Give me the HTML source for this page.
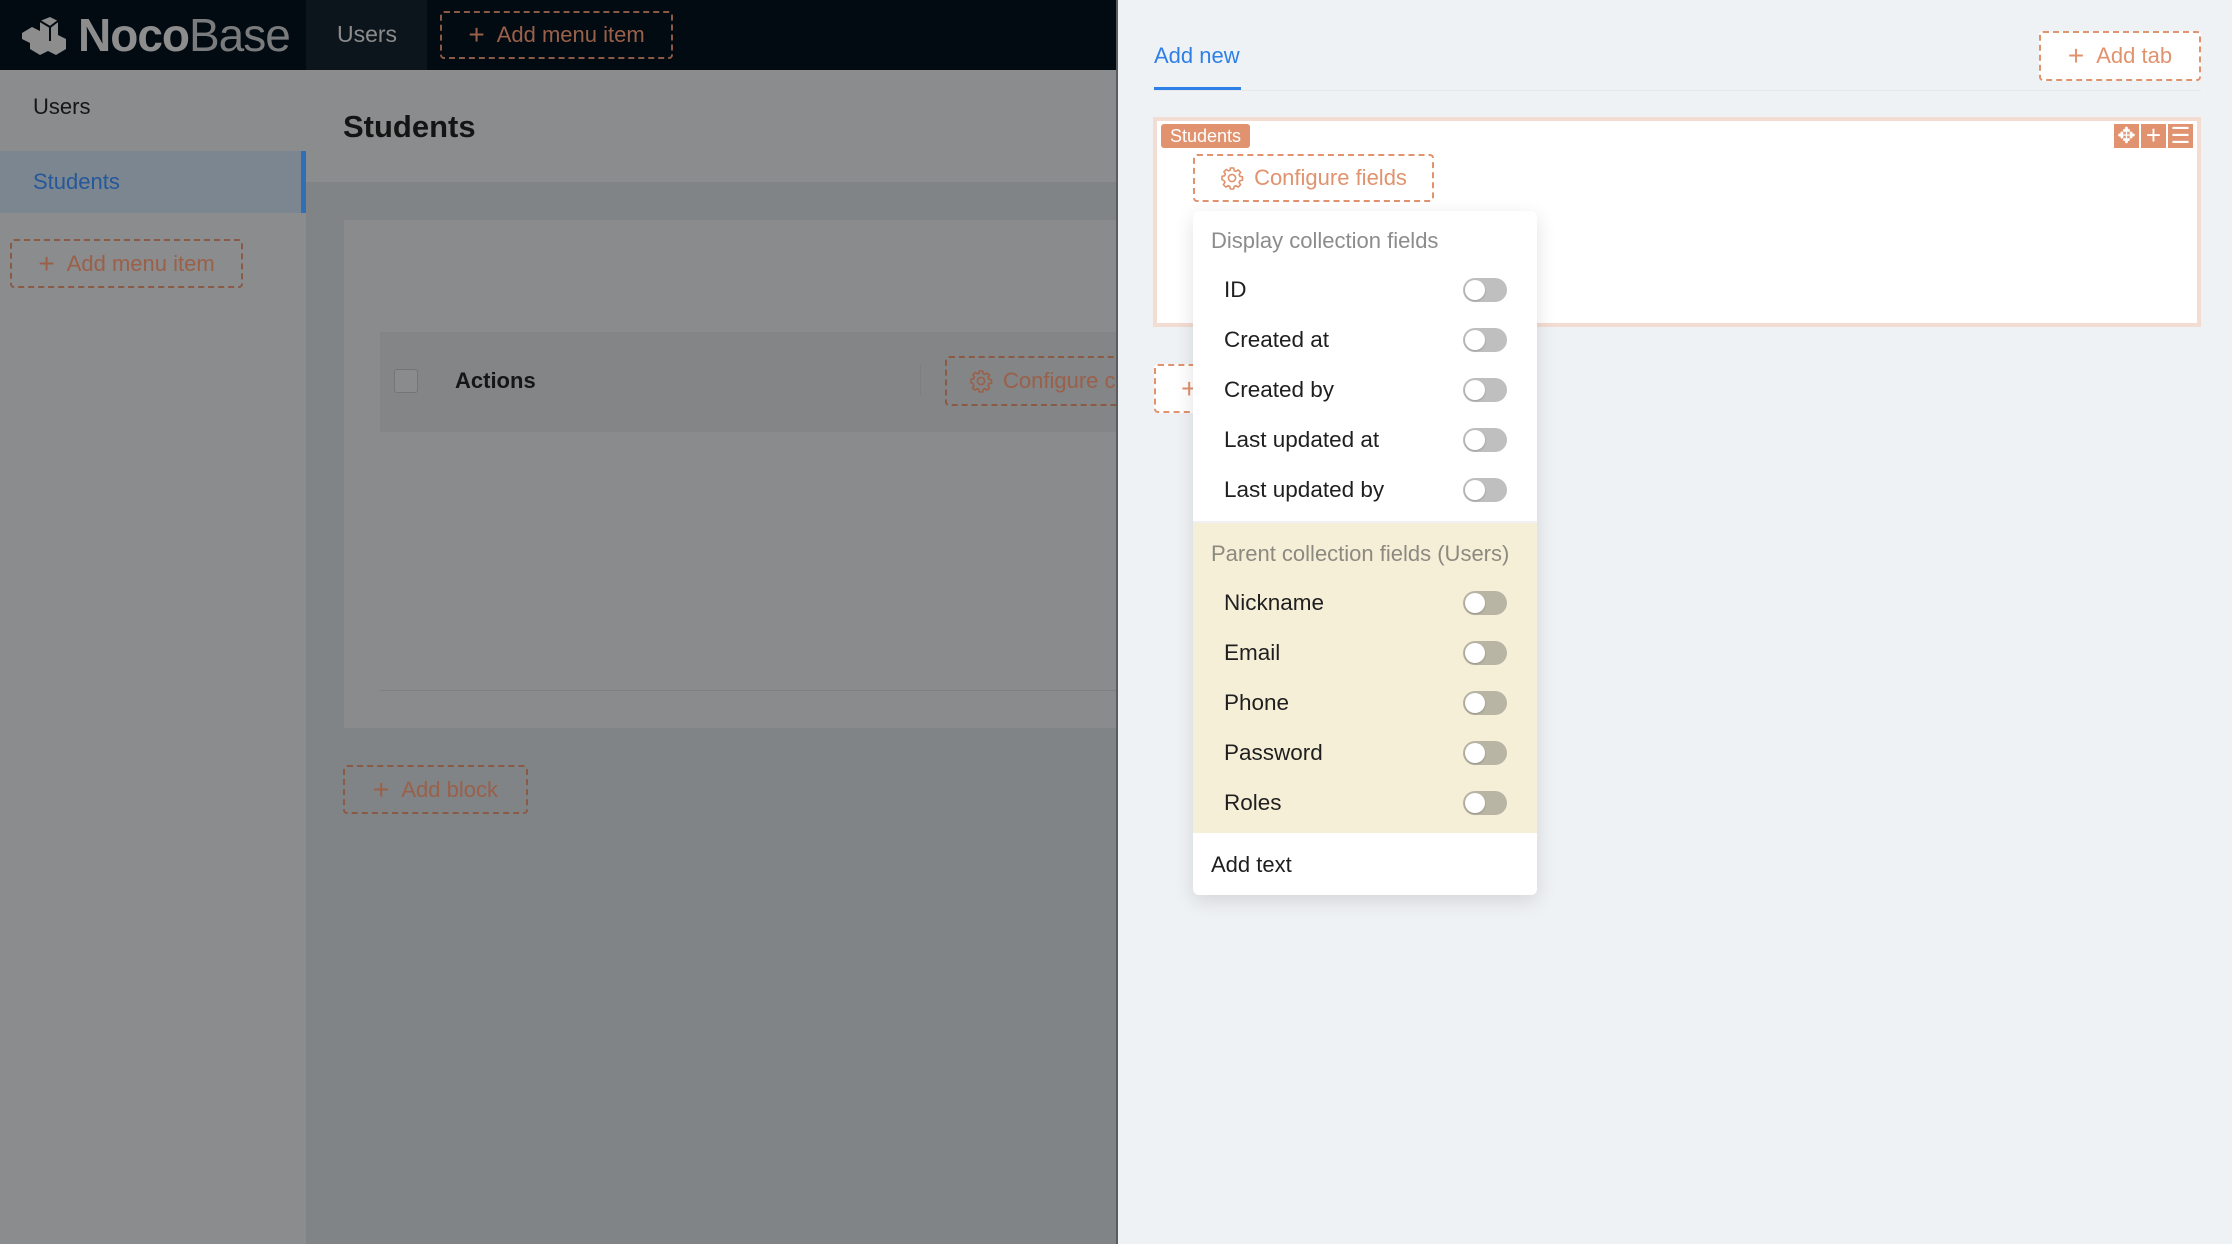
<!DOCTYPE html>
<html><head><meta charset="utf-8"><style>
*{box-sizing:border-box;margin:0;padding:0}
body{width:2232px;height:1244px;position:relative;overflow:hidden;font-family:"Liberation Sans",sans-serif;background:#818486}
.abs{position:absolute}
.dash{position:absolute;border:2px dashed #e0936e;border-radius:4px;color:#e0936e;font-size:22px;display:flex;align-items:center;justify-content:center;gap:12px}
.dashd{border-color:#8a5a44;color:#9a6049}
.plus{font-size:28px;font-weight:300;line-height:1}
.row{position:absolute;left:31px;font-size:22.5px;color:#1f1f1f}
.tg{position:absolute;left:270px;width:44px;height:24px;border-radius:12px;background:#bfbfbf}
.tg::after{content:"";position:absolute;left:2px;top:2px;width:20px;height:20px;border-radius:50%;background:#fff;box-shadow:0 1px 2px rgba(0,0,0,.2)}
.y .tg{background:#b8b5a5}
</style></head><body>
<svg width="0" height="0" style="position:absolute"><defs><g id="gear"><path d="M10.3 2h3.4l.5 2.6 1.8.8 2.2-1.5 2.4 2.4-1.5 2.2.8 1.8 2.6.5v3.4l-2.6.5-.8 1.8 1.5 2.2-2.4 2.4-2.2-1.5-1.8.8-.5 2.6h-3.4l-.5-2.6-1.8-.8-2.2 1.5-2.4-2.4 1.5-2.2-.8-1.8L2 13.7v-3.4l2.6-.5.8-1.8-1.5-2.2 2.4-2.4 2.2 1.5 1.8-.8z" fill="none" stroke="currentColor" stroke-width="1.6" stroke-linejoin="round"/><circle cx="12" cy="12" r="3.6" fill="none" stroke="currentColor" stroke-width="1.6"/></g></defs></svg>
<!-- top header -->
<div class="abs" style="left:0;top:0;width:1117px;height:70px;background:#020a12"></div>
<div class="abs" style="left:306px;top:0;width:121px;height:70px;background:#0c141c"></div>
<svg class="abs" style="left:20px;top:15px" width="48" height="40" viewBox="0 0 48 40"><path d="M2 18 L12 12 L20 16 L20 6 L30 2 L38 6 L38 20 L46 24 L46 34 L36 40 L28 36 L20 40 L10 34 L10 28 L2 24Z" fill="#8d8d8d"/><path d="M20 6 L30 12 L38 6 M30 12 L30 26" stroke="#020a12" stroke-width="2" fill="none"/></svg>
<div class="abs" style="left:78px;top:8px;font-size:46px;color:#8d8d8d;letter-spacing:-1px"><b>Noco</b><span style="color:#7a7b7d">Base</span></div>
<div class="abs" style="left:337px;top:21px;font-size:23px;color:#8c8c8c">Users</div>
<div class="dash dashd" style="left:440px;top:11px;width:233px;height:48px"><span class="plus">+</span>Add menu item</div>
<!-- sidebar -->
<div class="abs" style="left:0;top:70px;width:306px;height:1174px;background:#8b8c8e"></div>
<div class="abs" style="left:33px;top:94px;font-size:22px;color:#161616">Users</div>
<div class="abs" style="left:0;top:151px;width:306px;height:62px;background:#7b8691;border-right:5px solid #2f6fb8"></div>
<div class="abs" style="left:33px;top:169px;font-size:22px;color:#24589a">Students</div>
<div class="dash dashd" style="left:10px;top:239px;width:233px;height:49px"><span class="plus">+</span>Add menu item</div>
<!-- content -->
<div class="abs" style="left:306px;top:70px;width:811px;height:112px;background:#8b8c8d"></div>
<div class="abs" style="left:343px;top:109px;font-size:31px;font-weight:bold;color:#141414">Students</div>
<div class="abs" style="left:344px;top:220px;width:773px;height:508px;background:#8a8b8c"></div>
<div class="abs" style="left:380px;top:332px;width:737px;height:100px;background:#848586"></div>
<div class="abs" style="left:394px;top:369px;width:24px;height:24px;border:1.5px solid #747576;border-radius:3px;background:#8a8b8c"></div>
<div class="abs" style="left:455px;top:368px;font-size:22px;font-weight:bold;color:#161616">Actions</div>
<div class="abs" style="left:920px;top:365px;width:1px;height:30px;background:#7d7e7f"></div>
<div class="dash dashd" style="left:945px;top:356px;width:200px;height:50px;justify-content:flex-start;padding-left:22px;gap:10px"><svg width="24" height="24" viewBox="0 0 24 24"><use href="#gear"/></svg>Configure c</div>
<div class="abs" style="left:380px;top:690px;width:737px;height:1px;background:#7e7f80"></div>
<div class="dash dashd" style="left:343px;top:765px;width:185px;height:49px"><span class="plus">+</span>Add block</div>
<!-- drawer -->
<div class="abs" style="left:1116px;top:0;width:2px;height:1244px;background:#5a5d60"></div>
<div class="abs" style="left:1118px;top:0;width:1114px;height:1244px;background:#eff2f5"></div>
<div class="abs" style="left:1154px;top:43px;font-size:22px;color:#2f80e6">Add new</div>
<div class="abs" style="left:1154px;top:87px;width:87px;height:3px;background:#2f80e6"></div>
<div class="abs" style="left:1154px;top:90px;width:1047px;height:1px;background:#e6e9ec"></div>
<div class="dash" style="left:2039px;top:31px;width:162px;height:50px;background:#fff"><span class="plus">+</span>Add tab</div>
<div class="abs" style="left:1153px;top:117px;width:1048px;height:210px;background:#fff;border:4px solid #f3ddd2"></div>
<div class="abs" style="left:1161px;top:124px;width:89px;height:24px;background:#e0936e;border-radius:3px;color:#fff;font-size:18px;text-align:center;line-height:24px">Students</div>
<div class="abs" style="left:2114px;top:124px;width:25px;height:24px;background:#e0936e;color:#fff;font-size:22px;text-align:center;line-height:24px">✥</div>
<div class="abs" style="left:2141px;top:124px;width:25px;height:24px;background:#e0936e;color:#fff;font-size:26px;text-align:center;line-height:22px">+</div>
<div class="abs" style="left:2168px;top:124px;width:25px;height:24px;background:#e0936e;color:#fff;font-size:22px;text-align:center;line-height:24px">☰</div>
<div class="dash" style="left:1193px;top:154px;width:241px;height:48px;background:#fff;gap:10px"><svg width="24" height="24" viewBox="0 0 24 24"><use href="#gear"/></svg>Configure fields</div>
<div class="dash" style="left:1154px;top:364px;width:60px;height:49px;background:#fff;justify-content:flex-start;padding-left:25px"><span class="plus">+</span></div>
<!-- dropdown -->
<div class="abs" style="left:1193px;top:211px;width:344px;height:684px;background:#fff;border-radius:6px;box-shadow:0 6px 20px rgba(0,0,0,.12);overflow:hidden">
  <div class="abs" style="left:18px;top:17px;font-size:22px;color:#8c8c8c">Display collection fields</div>
  <div class="row" style="top:66px">ID</div><div class="tg" style="top:67px"></div>
  <div class="row" style="top:116px">Created at</div><div class="tg" style="top:117px"></div>
  <div class="row" style="top:166px">Created by</div><div class="tg" style="top:167px"></div>
  <div class="row" style="top:216px">Last updated at</div><div class="tg" style="top:217px"></div>
  <div class="row" style="top:266px">Last updated by</div><div class="tg" style="top:267px"></div>
  <div class="abs y" style="left:0;top:310px;width:344px;height:312px;background:#f6efd8;border-top:2px solid #eef0f4">
    <div class="abs" style="left:18px;top:18px;font-size:22px;color:#8c8a80">Parent collection fields (Users)</div>
    <div class="row" style="top:67px">Nickname</div><div class="tg" style="top:68px"></div>
    <div class="row" style="top:117px">Email</div><div class="tg" style="top:118px"></div>
    <div class="row" style="top:167px">Phone</div><div class="tg" style="top:168px"></div>
    <div class="row" style="top:217px">Password</div><div class="tg" style="top:218px"></div>
    <div class="row" style="top:267px">Roles</div><div class="tg" style="top:268px"></div>
  </div>
  <div class="abs" style="left:18px;top:641px;font-size:22px;color:#1f1f1f">Add text</div>
</div>
</body></html>
